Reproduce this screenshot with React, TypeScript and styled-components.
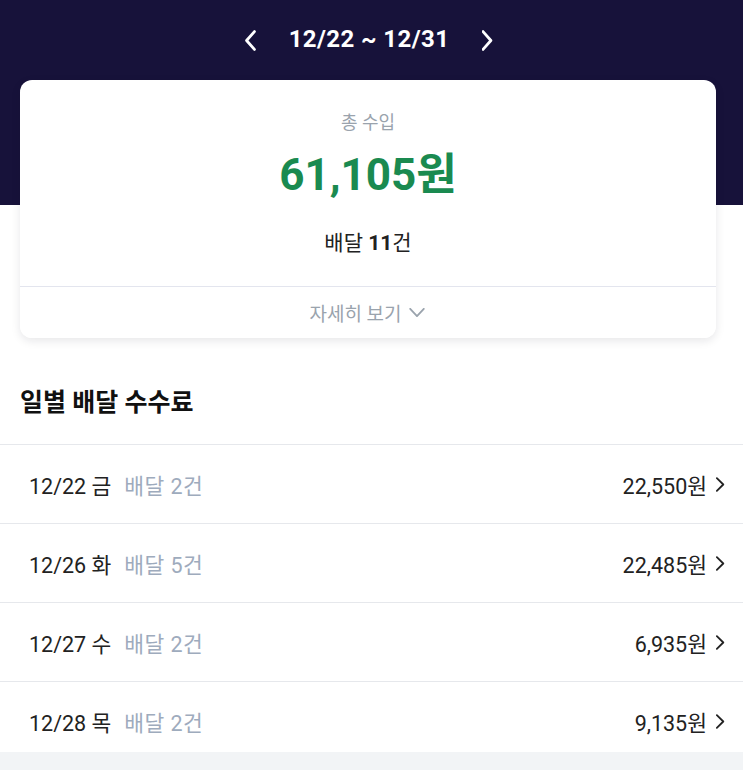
import { createGlobalStyle } from 'styled-components';
import styled from 'styled-components';

const GlobalStyle = createGlobalStyle`
  html, body {
    margin: 0;
    padding: 0;
    background: #ffffff;
  }
  body {
    font-family: Roboto, "Noto Sans CJK KR", "Noto Sans", sans-serif;
    -webkit-font-smoothing: antialiased;
  }
`;

const Page = styled.div`
  width: 743px;
  height: 770px;
  overflow: hidden;
  background: #ffffff;
`;

const Top = styled.section`
  background: linear-gradient(to bottom, #17123a 0, #17123a 205px, #ffffff 205px);
`;

const RangeNav = styled.div`
  height: 80px;
  display: flex;
  align-items: center;
  justify-content: center;
  gap: 33px;
  padding-right: 5px;
  color: #ffffff;
`;

const RangeLabel = styled.span`
  font-size: 24px;
  font-weight: 700;
  letter-spacing: 0.4px;
  padding-bottom: 2px;
`;

const NavButton = styled.button`
  border: 0;
  background: none;
  padding: 0;
  display: flex;
  color: #ffffff;
  cursor: pointer;
`;

const SummaryCard = styled.div`
  margin: 0 27px 0 20px;
  background: #ffffff;
  border-radius: 12px;
  box-shadow: 0 3px 10px rgba(20, 20, 40, 0.1);
  overflow: hidden;
`;

const SummaryBody = styled.div`
  display: flex;
  flex-direction: column;
  align-items: center;
  padding: 31px 0 28px;
`;

const SummaryLabel = styled.div`
  font-size: 18px;
  line-height: 24px;
  color: #9aa3ad;
`;

const SummaryAmount = styled.div`
  margin-top: 12px;
  font-size: 44px;
  line-height: 56px;
  font-weight: 700;
  color: #1a8a50;
`;

const SummaryCount = styled.div`
  margin-top: 25px;
  font-size: 21px;
  line-height: 30px;
  color: #222222;

  b {
    font-weight: 700;
  }
`;

const DetailToggle = styled.button`
  width: 100%;
  height: 52px;
  border: 0;
  border-top: 1px solid #e3e5ee;
  background: #ffffff;
  display: flex;
  align-items: center;
  justify-content: center;
  gap: 7px;
  padding-left: 4px;
  font-family: inherit;
  font-size: 19px;
  color: #9aa3ad;
  cursor: pointer;
`;

const SectionTitle = styled.h2`
  margin: 0;
  padding: 48px 20px 24px;
  font-size: 25px;
  line-height: 34px;
  font-weight: 700;
  color: #111111;
`;

const DayList = styled.ul`
  list-style: none;
  margin: 0;
  padding: 0;
`;

const DayRow = styled.li`
  height: 78px;
  border-top: 1px solid #e6e8ec;
  display: flex;
  align-items: center;
  padding: 0 18px 0 29px;
  font-size: 21.5px;
  color: #222222;
`;

const DayDate = styled.span`
  margin-right: 13px;
`;

const DayCount = styled.span`
  color: #9eabbd;
  flex: 1;
  letter-spacing: 0.4px;
`;

const DayAmount = styled.span`
  display: flex;
  align-items: center;
  gap: 9px;
`;

const BottomBar = styled.div`
  position: fixed;
  left: 0;
  right: 0;
  bottom: 0;
  height: 18px;
  background: #f2f4f6;
`;

type Dir = 'left' | 'right' | 'down';

const paths: Record<Dir, string> = {
  left: 'M9 1.5 L1.5 10 L9 18.5',
  right: 'M1 1.5 L8.5 10 L1 18.5',
  down: 'M1.5 1 L10 9.5 L18.5 1',
};

const Chevron = ({ dir, width, height, stroke }: { dir: Dir; width: number; height: number; stroke: number }) => (
  <svg
    width={width}
    height={height}
    viewBox={dir === 'down' ? '0 0 20 10.5' : '0 0 10.5 20'}
    preserveAspectRatio="none"
    fill="none"
  >
    <path
      d={paths[dir]}
      stroke="currentColor"
      strokeWidth={stroke}
      strokeLinecap="round"
      strokeLinejoin="round"
      vectorEffect="non-scaling-stroke"
    />
  </svg>
);

const days = [
  { date: '12/22 금', count: 2, amount: '22,550원' },
  { date: '12/26 화', count: 5, amount: '22,485원' },
  { date: '12/27 수', count: 2, amount: '6,935원' },
  { date: '12/28 목', count: 2, amount: '9,135원' },
];

const App = () => {
  return (
    <Page>
      <GlobalStyle />
      <Top>
        <RangeNav>
          <NavButton aria-label="이전">
            <Chevron dir="left" width={11} height={21} stroke={2.8} />
          </NavButton>
          <RangeLabel>12/22 ~ 12/31</RangeLabel>
          <NavButton aria-label="다음">
            <Chevron dir="right" width={11} height={21} stroke={2.8} />
          </NavButton>
        </RangeNav>
        <SummaryCard>
          <SummaryBody>
            <SummaryLabel>총 수입</SummaryLabel>
            <SummaryAmount>61,105원</SummaryAmount>
            <SummaryCount>
              배달 <b>11</b>건
            </SummaryCount>
          </SummaryBody>
          <DetailToggle>
            자세히 보기
            <Chevron dir="down" width={16} height={9} stroke={1.8} />
          </DetailToggle>
        </SummaryCard>
      </Top>
      <SectionTitle>일별 배달 수수료</SectionTitle>
      <DayList>
        {days.map((day) => (
          <DayRow key={day.date}>
            <DayDate>{day.date}</DayDate>
            <DayCount>배달 {day.count}건</DayCount>
            <DayAmount>
              {day.amount}
              <Chevron dir="right" width={9} height={15} stroke={1.8} />
            </DayAmount>
          </DayRow>
        ))}
      </DayList>
      <BottomBar />
    </Page>
  );
};

export default App;
